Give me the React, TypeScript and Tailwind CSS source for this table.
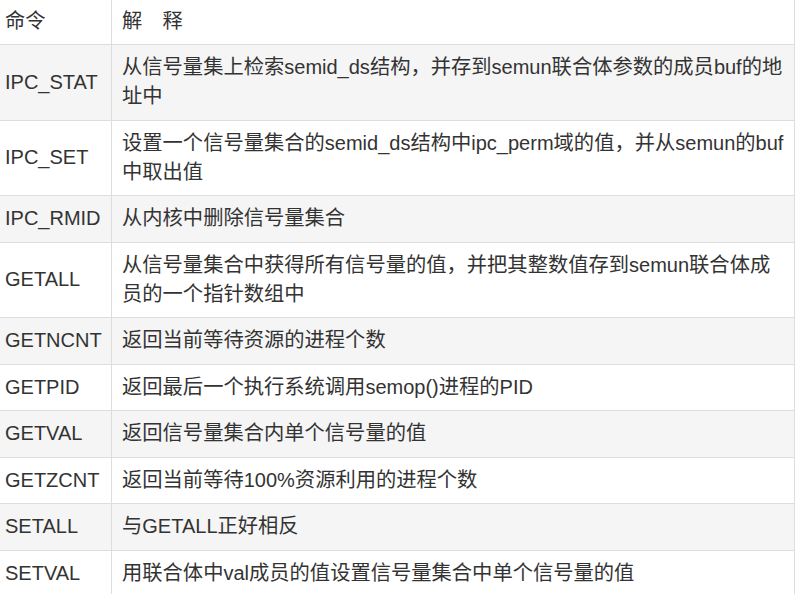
const rows: [string, string[]][] = [
  ["IPC_STAT", ["从信号量集上检索semid_ds结构，并存到semun联合体参数的成员buf的地", "址中"]],
  ["IPC_SET", ["设置一个信号量集合的semid_ds结构中ipc_perm域的值，并从semun的buf", "中取出值"]],
  ["IPC_RMID", ["从内核中删除信号量集合"]],
  ["GETALL", ["从信号量集合中获得所有信号量的值，并把其整数值存到semun联合体成", "员的一个指针数组中"]],
  ["GETNCNT", ["返回当前等待资源的进程个数"]],
  ["GETPID", ["返回最后一个执行系统调用semop()进程的PID"]],
  ["GETVAL", ["返回信号量集合内单个信号量的值"]],
  ["GETZCNT", ["返回当前等待100%资源利用的进程个数"]],
  ["SETALL", ["与GETALL正好相反"]],
  ["SETVAL", ["用联合体中val成员的值设置信号量集合中单个信号量的值"]],
];

// latin runs are set a touch smaller than the CJK glyphs
function Line({ text }: { text: string }) {
  const parts = text.split(/([\x00-\x7f]+)/).filter(Boolean);
  return (
    <div className="whitespace-nowrap">
      {parts.map((p, i) =>
        /^[\x00-\x7f]+$/.test(p) ? (
          <span key={i} className="text-[20px] leading-none">
            {p}
          </span>
        ) : (
          <span key={i}>{p}</span>
        ),
      )}
    </div>
  );
}

function Row({
  cmd,
  lines,
  striped,
}: {
  cmd: string;
  lines: string[];
  striped: boolean;
}) {
  return (
    <div className={`flex border-b border-[#dddddd] ${striped ? "bg-[#f5f5f5]" : "bg-white"}`}>
      <div className="flex w-[112px] shrink-0 items-center border-r border-[#dddddd] py-[8.25px] pl-[5px]">
        <Line text={cmd} />
      </div>
      <div className="min-w-0 flex-1 py-[8.25px] pl-[10px]">
        {lines.map((l) => (
          <Line key={l} text={l} />
        ))}
      </div>
    </div>
  );
}

export default function App() {
  return (
    <div className="h-[594px] w-[796px] overflow-hidden bg-white">
      <div
        className="-mt-[1.5px] w-[795px] border-r border-[#dddddd] text-[20.3px] leading-[29px] text-[#333333]"
        style={{ fontFamily: '"Liberation Sans", "Noto Sans CJK SC", sans-serif' }}
      >
        <Row cmd="命令" lines={["解　释"]} striped={false} />
        {rows.map(([cmd, lines], i) => (
          <Row key={cmd} cmd={cmd} lines={lines} striped={i % 2 === 0} />
        ))}
      </div>
    </div>
  );
}
